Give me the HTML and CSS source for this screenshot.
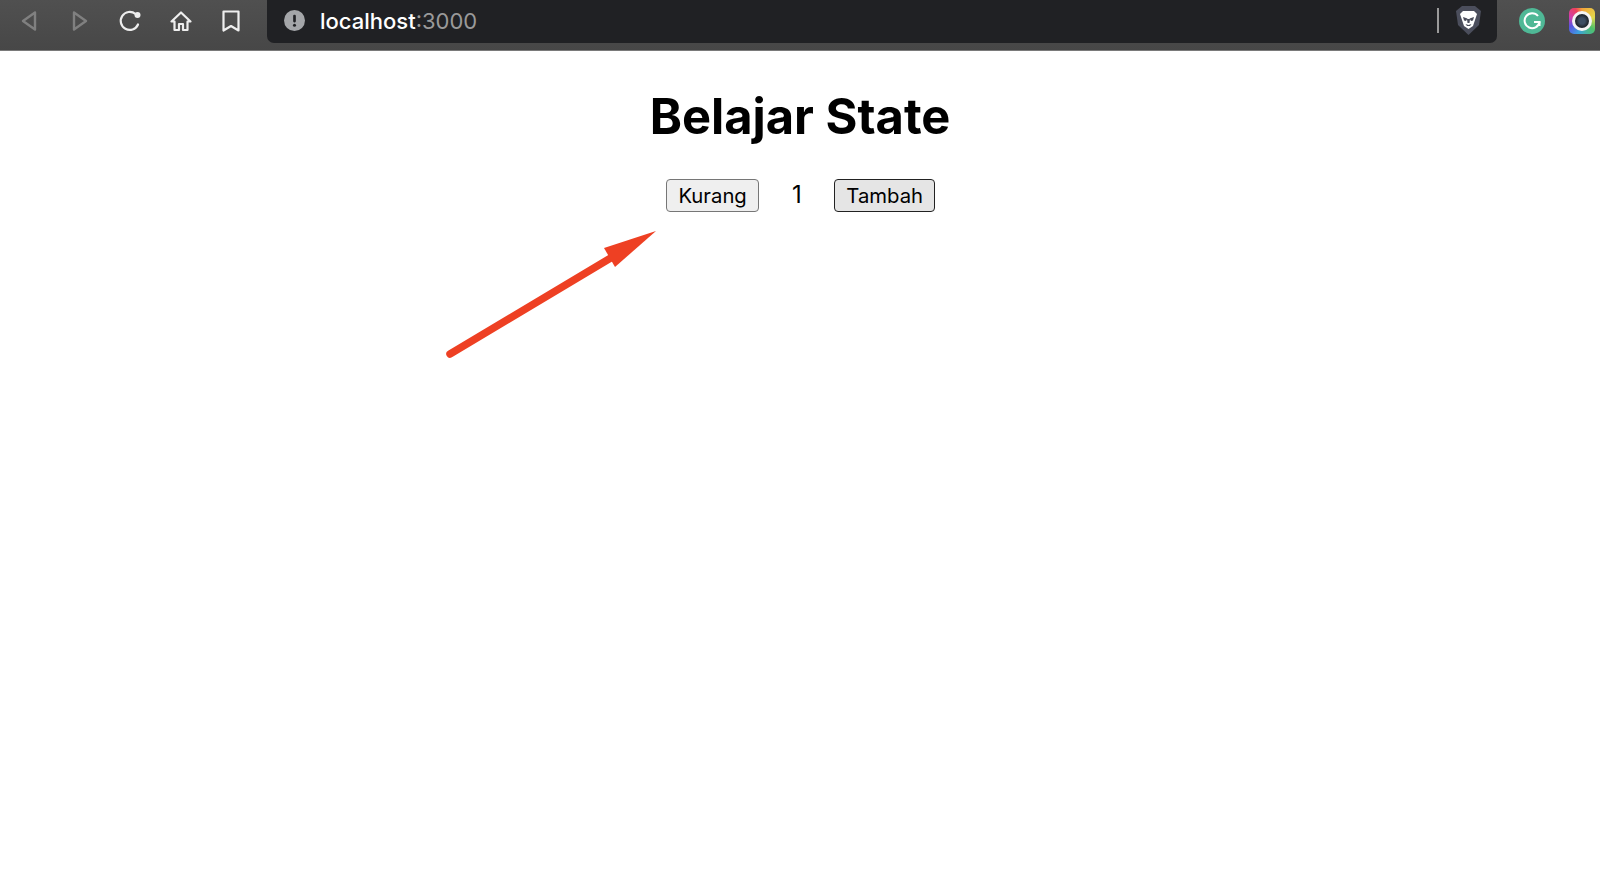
FILE: index.html

```html
<!DOCTYPE html>
<html lang="en">
<head>
  <meta charset="UTF-8" />
  <meta name="viewport" content="width=device-width, initial-scale=1.0"/>
  <title>Belajar State</title>
  <link rel="stylesheet" href="styles.css">
</head>
<body>
  <div class="toolbar">
    <div class="nav">
      <svg class="nav-icon" viewBox="0 0 24 24"><path d="M18 3.5 L6 12 L18 20.5 Z" fill="none" stroke="#808080" stroke-width="2.4" stroke-linejoin="round"/></svg>
      <svg class="nav-icon" viewBox="0 0 24 24"><path d="M6 3.5 L18 12 L6 20.5 Z" fill="none" stroke="#808080" stroke-width="2.4" stroke-linejoin="round"/></svg>
      <svg class="nav-icon" viewBox="0 0 24 24"><path d="M20 15.5 A9 9 0 1 1 17.5 5" fill="none" stroke="#eee" stroke-width="2.2" stroke-linecap="round"/><circle cx="19.5" cy="6" r="3" fill="#eee"/></svg>
      <svg class="nav-icon" viewBox="0 0 24 24"><path d="M2.5 12.5 L12 3.5 L21.5 12.5 H18.5 V21 H14 V15 H10 V21 H5.5 V12.5 Z" fill="none" stroke="#eee" stroke-width="2.2" stroke-linejoin="round" stroke-linecap="round"/></svg>
      <svg class="nav-icon" viewBox="0 0 24 24"><path d="M4.5 2.5 H19.5 V21.5 L12 17 L4.5 21.5 Z" fill="none" stroke="#eee" stroke-width="2.2" stroke-linejoin="round"/></svg>
    </div>
    <div class="address">
      <svg class="warn" viewBox="0 0 22 22"><circle cx="11" cy="11" r="11" fill="#a4a6a9"/><rect x="9.6" y="5" width="2.8" height="8" rx="1.2" fill="#202124"/><circle cx="11" cy="16" r="1.6" fill="#202124"/></svg>
      <span class="url">localhost<span class="port">:3000</span></span>
      <span class="divider"></span>
      <svg class="brave" viewBox="0 0 25 29"><path d="M6 0 H19 L25 5 L23 19 L12.5 29 L2 19 L0 5 Z" fill="#4b4e5c"/><path d="M7 5 H18 L21 8 L19 14 L17 20 L12.5 23 L8 20 L6 14 L4 8 Z" fill="#fff"/><path d="M7 11 L11.5 12.5 L10 15 L8 14.5 Z M18 11 L13.5 12.5 L15 15 L17 14.5 Z M11 13 H14 L13.5 17 H11.5 Z M9.5 18 L12.5 19 L15.5 18 L14 20 H11 Z" fill="#4b4e5c"/></svg>
    </div>
    <div class="extensions">
      <svg class="grammarly" viewBox="0 0 26 26"><circle cx="13" cy="13" r="13" fill="#4fb896"/><path d="M19 8 A7.5 7.5 0 1 0 20.5 14 H15" fill="none" stroke="#fff" stroke-width="2"/><path d="M20.5 14 V18" stroke="#fff" stroke-width="2"/></svg>
      <div class="camera"><div class="lens"></div></div>
    </div>
  </div>

  <div class="page">
    <h1 class="title">Belajar State</h1>
    <div class="counter">
      <button class="btn">Kurang</button>
      <span class="count">1</span>
      <button class="btn btn-focus">Tambah</button>
    </div>
  </div>

  <svg class="arrow" viewBox="0 0 240 140"><path d="M20 134 L184 36" stroke="#ee4023" stroke-width="7.5" stroke-linecap="round"/><path d="M226 11 L174 28 L185 47 Z" fill="#ee4023"/></svg>
</body>
</html>
```

FILE: styles.css

```css
body {
  margin: 0;
  background: #fff;
  font-family: Inter, "Liberation Sans", sans-serif;
  color: #000;
}
.toolbar {
  display: flex;
  height: 50px;
  background: linear-gradient(#505050, #474747);
  border-bottom: 1px solid #7a7a7a;
}
.nav {
  display: flex;
  align-items: center;
  gap: 26.6px;
  width: 267px;
  height: 42px;
  padding-left: 17px;
  box-sizing: border-box;
}
.nav-icon {
  width: 24px;
  height: 24px;
  flex: none;
}
.address {
  display: flex;
  align-items: center;
  width: 1230px;
  height: 43px;
  padding: 0 16px 2px 17px;
  box-sizing: border-box;
  background: #202124;
  border-radius: 0 0 7px 7px;
}
.warn {
  width: 21px;
  height: 21px;
}
.url {
  margin-left: 15px;
  font-size: 22px;
  font-weight: 500;
  color: #fff;
}
.port {
  color: #9a9a9a;
  font-weight: 400;
}
.divider {
  width: 2px;
  height: 25px;
  margin-left: auto;
  background: #9a9a9a;
}
.brave {
  width: 25px;
  height: 29px;
  margin-left: 17px;
}
.extensions {
  display: flex;
  align-items: center;
  gap: 24px;
  height: 42px;
  padding-left: 22px;
}
.grammarly {
  width: 26px;
  height: 26px;
  flex: none;
}
.camera {
  display: flex;
  align-items: center;
  justify-content: center;
  width: 26px;
  height: 26px;
  flex: none;
  border-radius: 5px;
  background: conic-gradient(#f2a33a, #e3d84a 20%, #4fc26a 35%, #3ba0e0 55%, #5a54e0 68%, #d03fb0 80%, #ee3f5c 92%, #f2a33a);
}
.lens {
  width: 14px;
  height: 14px;
  border: 3px solid #f4f4f4;
  border-radius: 50%;
  background: radial-gradient(#3d4e63 30%, #232a33 60%);
}
.page {
  display: flex;
  flex-direction: column;
  align-items: center;
}
.title {
  margin: 38px 0 0;
  font-size: 48.8px;
  line-height: 56px;
  font-weight: 700;
}
.counter {
  display: flex;
  align-items: center;
  margin-top: 34px;
  padding-left: 1px;
}
.btn {
  height: 33px;
  padding: 0 11.5px;
  font-family: inherit;
  font-size: 20.3px;
  color: #000;
  background: #efefef;
  border: 1px solid #767676;
  border-radius: 4px;
}
.btn-focus {
  padding: 0 11px;
  background: #e5e5e5;
  border-color: #222;
}
.count {
  width: 75px;
  text-align: center;
  font-size: 24px;
  margin-top: -3px;
}
.arrow {
  position: absolute;
  left: 430px;
  top: 220px;
  width: 240px;
  height: 140px;
}
```
